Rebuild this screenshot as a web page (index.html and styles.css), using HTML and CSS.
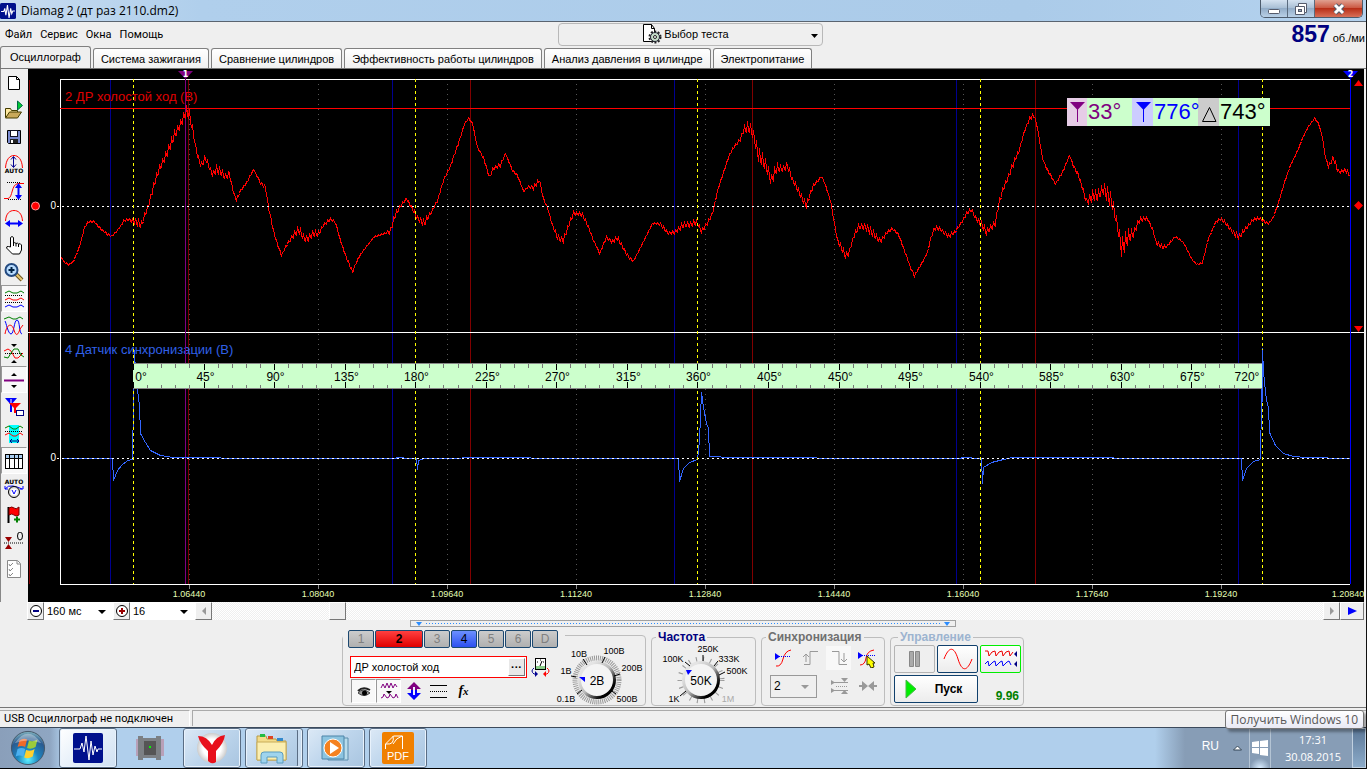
FILE: index.html
```html
<!DOCTYPE html>
<html lang="ru">
<head>
<meta charset="utf-8">
<title>Diamag 2</title>
<link rel="stylesheet" href="styles.css">
</head>
<body>
<div class="window">
<header class="titlebar">
  <svg class="app-icon" width="16" height="16" viewBox="0 0 30 30"><rect width="30" height="30" rx="3" fill="#00108c"/><path d="M2 16h5l2-6 2 13 3-19 3 24 3-18 2 10 2-5h4" fill="none" stroke="#fff" stroke-width="2"/></svg>
  <span class="title">Diamag 2 (дт раз 2110.dm2)</span>
  <div class="winbtns">
    <button class="wb" aria-label="Свернуть"><svg width="14" height="12"><rect x="1.500" y="6.500" width="11" height="4" rx="1" fill="#fff" stroke="#555b6b"/></svg></button>
    <button class="wb" aria-label="Развернуть"><svg width="14" height="14"><path d="M4.500 1.500h8v9h-2v2h-9v-8h3z" fill="#fff" stroke="#555b6b"/><path d="M10.500 10.500v-6h-6" fill="none" stroke="#555b6b"/><rect x="4.500" y="7.500" width="3" height="2" fill="#9ab" stroke="#555b6b"/></svg></button>
    <button class="wb wb-close" aria-label="Закрыть"><svg width="16" height="14"><path d="M4 3l8 8M12 3l-8 8" stroke="#555b6b" stroke-width="5"/><path d="M4 3l8 8M12 3l-8 8" stroke="#fff" stroke-width="3"/></svg></button>
  </div>
</header>

<div class="menubar">
  <nav class="menu"><a href="#">Файл</a><a href="#">Сервис</a><a href="#">Окна</a><a href="#">Помощь</a></nav>
  <button class="test-picker">
    <svg width="22" height="20" viewBox="0 0 22 20"><path d="M2.500 .5h8l3 4v13h-11z" fill="#fff" stroke="#000"/><path d="M10.500 .5v4h3" fill="none" stroke="#000"/><circle cx="14" cy="13" r="5.500" fill="none" stroke="#222" stroke-width="2" stroke-dasharray="2 1.500"/><circle cx="14" cy="13" r="4.500" fill="#c5dcc8" stroke="#223"/><circle cx="14" cy="13" r="1.500" fill="#fff" stroke="#222"/></svg>
    <span>Выбор теста</span>
    <svg class="picker-arrow" width="7" height="4"><path d="M0 0h7l-3.500 4z"/></svg>
  </button>
  <div class="rpm"><b>857</b><span>об./ми</span></div>
</div>

<nav class="tabs">
  <button class="tab active">Осциллограф</button><button class="tab">Система зажигания</button><button class="tab">Сравнение цилиндров</button><button class="tab">Эффективность работы цилиндров</button><button class="tab">Анализ давления в цилиндре</button><button class="tab">Электропитание</button>
</nav>

<main class="workspace">
  <div class="tools">
    <button aria-label="Новый"><svg viewBox="0 0 20 20"><path d="M4.500 3.500h8l3 3v10h-11z" fill="#fff" stroke="#000"/><path d="M12.500 3.500v3h3" fill="none" stroke="#000"/></svg></button>
    <button aria-label="Открыть"><svg viewBox="0 0 20 20"><path d="M1.500 17.500v-9h5l1 2h6v2" fill="#ffe9a0" stroke="#443c00"/><path d="M1.500 18l4-6h12l-4 6z" fill="#c9a95a" stroke="#443c00"/><path d="M13.500 1v9l5-4.500z" fill="#0c3" stroke="#064"/></svg></button>
    <button aria-label="Сохранить"><svg viewBox="0 0 20 20"><path d="M3.500 3.500h13v13h-12l-1-1z" fill="#7b8bd0" stroke="#000"/><rect x="6.500" y="3.500" width="7" height="6" fill="#fff" stroke="#112"/><rect x="6" y="12" width="8" height="4" fill="#222"/><rect x="7" y="13" width="2" height="3" fill="#fff"/></svg></button>
    <button aria-label="Автоамплитуда"><svg viewBox="0 0 20 20"><path d="M1.500 14C2 5 6 1.500 10 1.500S18 5 18.500 14" fill="none" stroke="red"/><path d="M9.500 3v10M7 5.500l2.500-3 2.500 3M7 10.500l2.500 3 2.500-3" fill="none" stroke="#000090"/><text x="10" y="19" class="tiny">AUTO</text></svg></button>
    <button aria-label="Амплитуда"><svg viewBox="0 0 20 20"><path d="M0 17.500h4c5-1 3-14 10-15h6" fill="none" stroke="red"/><path d="M3 1.500h14M4 18.500h14" stroke="#000" stroke-dasharray="1 1"/><path d="M14.500 5v11" stroke="#00f" stroke-width="2"/><path d="M11 7l3.500-5 3.500 5zM11 14l3.500 5 3.500-5z" fill="#00f"/></svg></button>
    <button aria-label="Развёртка"><svg viewBox="0 0 20 20"><path d="M1.500 13C2 5 6 2.500 10 2.500S18 5 18.500 13" fill="none" stroke="red"/><path d="M4 15.500h12" stroke="#00f" stroke-width="2"/><path d="M6 12l-5 3.500 5 3.500zM14 12l5 3.500-5 3.500z" fill="#00f"/></svg></button>
    <button aria-label="Рука"><svg viewBox="0 0 20 20"><path d="M6.500 12V2.500q1.500-2 3 0V8q1.500-1 2.500.5 1.500-1 2.500.5 2-1 3 1v5l-2 4h-7l-6-6q0-2 2-1.500z" fill="#fff" stroke="#000"/><path d="M9.500 8v3M12 8.500v3M14.500 9v3" stroke="#000"/></svg></button>
    <button aria-label="Увеличить"><svg viewBox="0 0 20 20"><path d="M12 12l6 6" stroke="#6b5420" stroke-width="4"/><path d="M12 12l6 6" stroke="#e8c870" stroke-width="2"/><circle cx="7.500" cy="8" r="6" fill="#b8dcff" stroke="#234a80" stroke-width="2"/><path d="M4.500 8h6M7.500 5v6" stroke="#024" stroke-width="2"/></svg></button>
    <button class="on" aria-label="Раздельно"><svg viewBox="0 0 20 20"><path d="M1 4l4-2 4 2 4 0 4-2 3 2" fill="none" stroke="green"/><path d="M1 11l4-2 4 2 4 0 4-2 3 2" fill="none" stroke="red"/><path d="M1 18l4-2 4 2 4 0 4-2 3 2" fill="none" stroke="#00f"/><path d="M1 6.500h18M1 13.500h18" stroke="#000" stroke-dasharray="1 1"/></svg></button>
    <button aria-label="Совместно"><svg viewBox="0 0 20 20"><path d="M0 3l5-2 4 2h3l4-2 3 2" fill="none" stroke="green"/><path d="M1 5c1 1 3 13 6 13s3-14 6-14 2 14 5 14" fill="none" stroke="#00f"/><path d="M1 18c2-11 7-11 9-4s4 5 6-1l3-4" fill="none" stroke="red"/></svg></button>
    <button aria-label="Наложить"><svg viewBox="0 0 20 20"><path d="M1 10.500h18" stroke="#000" stroke-dasharray="1 1"/><path d="M0 8l4-2 3 2 4 7 3 0 5-5" fill="none" stroke="red"/><path d="M0 14l4 1 3-5 3-4 4 0 3 6 3 2" fill="none" stroke="green"/><path d="M7 1h6l-3 3zM7 20h6l-3-3z"/></svg></button>
    <button class="on" aria-label="Разделитель"><svg viewBox="0 0 20 20"><path d="M0 10.500h20" stroke="purple" stroke-width="2"/><path d="M7 6h6l-3-3zM7 15h6l-3 3z"/></svg></button>
    <button aria-label="Маркеры"><svg viewBox="0 0 20 20"><path d="M1 1h12l-6 7z" fill="#00f"/><path d="M7 5v10" stroke="#00f" stroke-width="2"/><path d="M5 6h12l-6 6z" fill="red"/><path d="M11 9v7" stroke="red" stroke-width="2"/><path d="M7 2v4" stroke="#fff"/><rect x="12.500" y="13.500" width="7" height="5" fill="#fff" stroke="#000080"/></svg></button>
    <button aria-label="Окно анализа"><svg viewBox="0 0 20 20"><rect x="5" y="1" width="10" height="18" fill="#0ff"/><path d="M1 4l4-2 4 3 3 0 4-3 3 2" fill="none" stroke="green"/><path d="M1 7.500h18" stroke="#000" stroke-dasharray="1 1"/><path d="M1 11l4-2 4 3 3 0 4-3 3 2" fill="none" stroke="red"/><path d="M6 17h9M8 15l-2 2 2 2M13 15l2 2-2 2" stroke="#000080" fill="none"/></svg></button>
    <button class="on" aria-label="Таблица"><svg viewBox="0 0 20 20"><rect x="1.500" y="3.500" width="17" height="14" fill="#fff" stroke="#000"/><rect x="2" y="4" width="16" height="3" fill="#a8ccf0"/><path d="M1 7.500h18M5.500 4v14M10.500 4v14M14.500 4v14" stroke="#000"/></svg></button>
    <button aria-label="Автовольтметр"><svg viewBox="0 0 20 20"><text x="10" y="6" class="tiny">AUTO</text><path d="M1 11q3-4 8-3t9 3M1 8v3h3M19 8v3h-3" fill="none" stroke="#00f"/><circle cx="10" cy="14" r="5.500" fill="#ddd" stroke="#000"/><circle cx="10" cy="14" r="3.500" fill="#fff"/><path d="M8 12l2 4 2-4" fill="none" stroke="#00f"/></svg></button>
    <button aria-label="Флаг"><svg viewBox="0 0 20 20"><path d="M4.500 2v16" stroke="#000" stroke-width="2"/><path d="M5 3q3-2 5 0t5-1v8q-3 2-5 0t-5 0z" fill="red" stroke="#700"/><path d="M10 14.500h6M13 11.500v6" stroke="green" stroke-width="2"/></svg></button>
    <button aria-label="Ноль"><svg viewBox="0 0 20 20"><path d="M1 5h7l-3.500 5zM1 17h7l-3.500-5z" fill="#900"/><path d="M0 11h20" stroke="#000" stroke-dasharray="1 1"/><ellipse cx="16" cy="4" rx="2.500" ry="4" fill="none" stroke="#000"/></svg></button>
    <button aria-label="Список"><svg viewBox="0 0 20 20"><path d="M3.500 1.500h10l3 3v14h-13z" fill="#fff" stroke="#888"/><path d="M13 2v3h3M5 5l1 2 3-3M5 10l1 2 3-3M5 15l1 2 3-3" fill="none" stroke="#888"/></svg></button>
  </div>

  <svg class="scope" viewBox="28 69 1338 533" role="img" aria-label="Осциллограмма">
    <rect x="28" y="69" width="1336" height="533" fill="#000"/>
    <rect x="1364" y="69" width="2" height="533" fill="#f0f0f0"/>
    <g id="grid" class="crisp"></g>
    <text x="65" y="101" class="ch ch2">2 ДР холостой ход (В)</text>
    <text x="65" y="354" class="ch ch4">4 Датчик синхронизации (В)</text>
    <path class="crisp" d="M60.500 584V79.500H1350M28 332.500H1364M60 584.500H1350" fill="none" stroke="#fff"/>
    <path class="crisp" d="M60 108.500H1350" stroke="red"/>
    <path class="crisp" d="M185.500 79V584" stroke="purple"/>
    <path id="red-wave" class="crisp wave" stroke="red"/>
    <path id="blue-wave" class="crisp wave" stroke="#36f"/>
    <path class="crisp" d="M57 206.500H1350M57 458.500H1350" stroke="#fff" stroke-dasharray="2 3"/>
    <g id="marks" class="crisp"></g>
    <g id="ruler"></g>
    <path class="crisp" d="M1350.500 79V584" stroke="#00f"/>
    <path d="M178 71h15l-7.500 8z" fill="purple"/><path d="M1343 71h15l-7.500 8z" fill="#00f"/>
    <text x="185.500" y="77" class="flag">1</text><text x="1350.500" y="77" class="flag">2</text>
    <circle cx="35.500" cy="206" r="4" fill="red" stroke="#f99"/>
    <text x="56" y="209" class="zero">0</text><text x="56" y="461" class="zero">0</text>
    <path d="M1354 86h9l-4.500-6zM1354 326h9l-4.500 6zM1358.500 201l4.500 4.500-4.500 4.500-4.500-4.500z" fill="red"/>
    <g>
      <rect x="1067" y="98" width="203" height="28" fill="#cfc"/>
      <rect x="1067" y="98" width="20" height="28" fill="#e6cce6"/><rect x="1132" y="98" width="21" height="28" fill="#ccf"/><rect x="1198" y="98" width="21" height="28" fill="#ccc"/>
      <path d="M1070 102h15l-7.500 8z" fill="purple"/><path d="M1077.500 108v14" stroke="purple"/>
      <path d="M1136 102h15l-7.500 8z" fill="#00f"/><path d="M1143.500 108v14" stroke="#00f"/>
      <path d="M1209.500 107.500l6.500 14h-13.500z" fill="none" stroke="#000"/>
      <text x="1088" y="119" class="meas" fill="purple">33°</text><text x="1154" y="119" class="meas" fill="#00f">776°</text><text x="1220" y="119" class="meas" fill="#000">743°</text>
    </g>
  </svg>
</main>

<div class="scrollrow">
  <button class="sq" aria-label="Меньше"><svg width="14" height="14"><circle cx="7" cy="7" r="5.500" fill="#fff" stroke="#000"/><path d="M4 7h6" stroke="#000080" stroke-width="2"/></svg></button>
  <span class="sel w-time"><select aria-label="Длительность"><option>160 мс</option></select><svg width="8" height="4"><path d="M0 0h8l-4 4z"/></svg></span>
  <button class="sq" aria-label="Больше"><svg width="14" height="14"><circle cx="7" cy="7" r="5.500" fill="#fff" stroke="#000"/><path d="M4 7h6M7 4v6" stroke="#900" stroke-width="2"/></svg></button>
  <span class="sel w-zoom"><select aria-label="Масштаб"><option>16</option></select><svg width="8" height="4"><path d="M0 0h8l-4 4z"/></svg></span>
  <button class="sq" aria-label="Назад"><svg width="6" height="8"><path d="M5 0v8l-4-4z" fill="#999"/></svg></button>
  <div class="track"><div class="thumb"></div></div>
  <button class="sq" aria-label="Вперёд"><svg width="6" height="8"><path d="M1 0v8l4-4z" fill="#999"/></svg></button>
  <button class="sq play" aria-label="Воспроизвести"><svg width="9" height="8"><path d="M0 0v8l9-4z" fill="#00f"/></svg></button>
</div>

<div class="split-row"><div class="splitter"><svg width="6" height="4"><path d="M0 0h6l-3 4z" fill="#2a8cff"/></svg><i></i><svg width="6" height="4"><path d="M0 0h6l-3 4z" fill="#2a8cff"/></svg></div></div>

<section class="panel">
  <div class="group channels" role="group" aria-label="Каналы">
    <div class="ch-left">
      <div class="ch-tabs"><button>1</button><button class="c2">2</button><button>3</button><button class="c4">4</button><button>5</button><button>6</button><button>D</button></div>
      <div class="ch-name">
        <div class="name-box"><input type="text" value="ДР холостой ход" aria-label="Название канала"><button class="dots" aria-label="Выбрать">···</button></div>
        <button class="flat" aria-label="Калибровка"><svg width="20" height="20"><rect x="4.500" y="1.500" width="10" height="11" fill="#fff" stroke="#000"/><path d="M5 9h9v3h-9z" fill="#8c8"/><path d="M6 5h1M9 3h1M12 5h1M9 9l2-5" stroke="#000"/><path d="M3 11q-4 3 0 6h3" fill="none" stroke="#000090"/><path d="M4 14v6l3-3z" fill="#000090"/><path d="M16 11q4 3 0 6h-3" fill="none" stroke="red"/><path d="M15 14v6l-3-3z" fill="red"/></svg></button>
      </div>
      <div class="ch-icons">
        <button class="flat on" aria-label="Видимость"><svg width="20" height="20"><path d="M4 12q5-6 12 0-6 5-12 0z" fill="#999" stroke="#444"/><circle cx="10.500" cy="12" r="2.500"/><path d="M4 10q5-5 12-1" fill="none" stroke="#222" stroke-width="2"/></svg></button>
        <button class="flat on" aria-label="Фильтр"><svg width="20" height="20"><path d="M2 7l2-4 2 4 2-5 2 5 2-5 2 5 2-4 2 3M2 17l2-1 1-3 3 4 2-1 1-3 3 4 2-1 1-3 2 4" fill="none" stroke="purple"/><path d="M7 10h6l-3 3z"/></svg></button>
        <button class="flat" aria-label="Инверсия"><svg width="20" height="20"><path d="M3 8l7-7 7 7h-4v3h-6v-3z" fill="purple"/><path d="M3 12l7 7 7-7h-4v-3h-6v3z" fill="#00f"/><path d="M10 6v8" stroke="#eef" stroke-width="2"/></svg></button>
        <button class="flat" aria-label="Уровень"><svg width="20" height="20" class="crisp"><path d="M1 4.500h17M1 16.500h17" stroke="#000"/><path d="M1 10.500h17" stroke="#000" stroke-dasharray="1 1"/></svg></button>
        <button class="flat fx" aria-label="Функция">f<sub>x</sub></button>
      </div>
    </div>
    <svg class="dial" width="92" height="68" viewBox="554 640 92 68">
      <circle cx="597" cy="680" r="22" class="dial-ticks" stroke-dasharray="1 1" stroke-width="5"/>
      <circle cx="597" cy="680" r="17.500" fill="#f4f4f4" stroke="url(#ring)" stroke-width="3"/>
      <path d="M571 676l5 1M583 659l4 6M605 657l-3 6M620 674l-6 2M577 694l5-4M616 694l-4-3" stroke="#000"/>
      <path d="M579 677h6v5z" fill="#00f"/>
      <g class="dl"><text x="579" y="657">10В</text><text x="614" y="654">100В</text><text x="566" y="674">1В</text><text x="632" y="671">200В</text><text x="566" y="702">0.1В</text><text x="627" y="702">500В</text></g>
      <text x="597" y="685" class="dv">2В</text>
    </svg>
  </div>

  <fieldset class="group freq"><legend>Частота</legend>
    <svg class="dial" width="100" height="62" viewBox="652 644 100 62">
      <defs><linearGradient id="ring" x1="0" y1="0" x2="1" y2="1"><stop offset=".2" stop-color="#e4e4e4"/><stop offset=".5" stop-color="#bbb"/><stop offset=".8" stop-color="#000"/></linearGradient></defs>
      <circle cx="701" cy="680" r="20.500" class="dial-ticks" stroke-dasharray="1 6" stroke-width="6"/>
      <circle cx="701" cy="680" r="17.500" fill="#f4f4f4" stroke="url(#ring)" stroke-width="3"/>
      <path d="M685 662l5 4M703 655v6M718 661l-4 5M725 672l-6 3M680 696l6-5" stroke="#000"/>
      <path d="M686 670h6l-4 5z" fill="#00f"/>
      <g class="dl"><text x="708" y="652">250K</text><text x="673" y="662">100K</text><text x="729" y="662">333K</text><text x="737" y="674">500K</text><text x="674" y="702">1K</text><text x="728" y="702" fill="#aaa">1M</text></g>
      <text x="701" y="685" class="dv">50K</text>
    </svg>
  </fieldset>

  <fieldset class="group sync"><legend>Синхронизация</legend>
    <div class="sync-row">
      <button class="flat" aria-label="Уровень синхронизации"><svg width="20" height="20"><path d="M3 18q5 1 7-7t8-9" fill="none" stroke="red"/><path d="M2 8.500h16" stroke="#00f" stroke-dasharray="1 1"/><path d="M2 5v7l5-3.500z" fill="#00f"/></svg></button>
      <button class="flat" aria-label="Фронт"><svg width="20" height="20"><path d="M3 16.500h6v-13h8M2 9l3-3 3 3M5 7v7" fill="none" stroke="#999"/></svg></button>
      <button class="flat hatch" aria-label="Спад"><svg width="20" height="20"><path d="M3 3.500h7v13h8M12 11l3 3 3-3M15 5v8" fill="none" stroke="#999"/></svg></button>
      <button class="flat" aria-label="Выбор точки"><svg width="20" height="20"><path d="M3 17q5 0 6-7t8-8" fill="none" stroke="red"/><path d="M1 7.500h18" stroke="#00f" stroke-dasharray="1 1"/><path d="M1 4v7l5-3.500z" fill="#00f"/><path d="M10 8v9l2-1 2 4 3-1-1-4h2z" fill="#ff0" stroke="#330"/></svg></button>
    </div>
    <div class="sync-row">
      <span class="sel sel-sync"><select aria-label="Канал синхронизации"><option>2</option></select><svg width="8" height="4"><path d="M0 0h8l-4 4z" fill="#999"/></svg></span>
      <button class="flat" aria-label="Смещение"><svg width="20" height="20"><path d="M1 4l4 2.500-4 2.500zM11 2h7l-3.500 4zM11 18h7l-3.500-4zM1 12l4 2.500-4 2.500z" fill="#999"/><path d="M3 6.500h15M3 14.500h15" stroke="#999"/><path d="M6 10.500h12" stroke="#999" stroke-dasharray="1 1"/></svg></button>
      <button class="flat" aria-label="Сжать"><svg width="20" height="20"><path d="M1 10h5M14 10h5" stroke="#999" stroke-width="2"/><path d="M4 5v10l6-5zM16 5v10l-6-5z" fill="#999"/></svg></button>
    </div>
  </fieldset>

  <fieldset class="group ctrl"><legend>Управление</legend>
    <button class="cbtn dis" aria-label="Пауза"><svg width="14" height="18"><path d="M1.500 1.500h4v15h-4zM7.500 1.500h4v15h-4z" fill="#aaa" stroke="#888"/></svg></button>
    <button class="cbtn" aria-label="Однократно"><svg width="32" height="22"><path d="M2 11C7-2 12-2 16 11s9 13 14 0" fill="none" stroke="red"/></svg></button>
    <button class="cbtn green" aria-label="Запись"><svg width="36" height="24"><path d="M2 4h3l1 5 3-4 3-1 1 5 3-4 3-1 1 5 3-4 3-1 1 5 3-4" fill="none" stroke="#e00"/><path d="M2 17l3-3 1 5 4-4 2-1 1 5 4-4 2-1 1 5 4-4 2-1 2 4" fill="none" stroke="#00f"/><path d="M34 4v6l-3-3zM34 14v6l-3-3z" fill="#000080"/></svg></button>
    <button class="cbtn start"><svg width="12" height="20"><path d="M1 1v18l10-9z" fill="#0e0" stroke="#4b4"/></svg><b>Пуск</b></button>
    <output class="load">9.96</output>
  </fieldset>
</section>

<footer class="status"><span class="st-main">USB Осциллограф не подключен</span><span class="st-rest"></span></footer>

<div class="taskbar">
  <button class="orb" aria-label="Пуск Windows"><svg width="36" height="36" viewBox="0 0 38 38"><defs><radialGradient id="orb" cx=".5" cy=".85" r=".9"><stop offset="0" stop-color="#5ff0ff"/><stop offset=".35" stop-color="#1c86c0"/><stop offset=".7" stop-color="#2a5a90"/><stop offset="1" stop-color="#9cc"/></radialGradient></defs><circle cx="19" cy="19" r="17.500" fill="url(#orb)" stroke="#456"/><path d="M10 11q4-3 8-1l-2 8q-4-2-8 0z" fill="#f06a2a"/><path d="M20 11q4 2 9-1l-2 8q-5 3-9 1z" fill="#9ccb3b"/><path d="M8 20q4-2 8 0l-2 8q-4-2-8 0z" fill="#4cb0f0"/><path d="M17 21q5 2 9-1l-2 8q-5 3-9 1z" fill="#ffd02e"/><path d="M5 14Q19-6 33 14 19 8 5 14z" fill="#fff" opacity=".35"/></svg></button>
  <button class="task lit" aria-label="Diamag"><svg width="30" height="30" viewBox="0 0 30 30"><rect width="30" height="30" rx="2" fill="#00108c"/><path d="M1 16h6l2-6 2 9 2-16 3 24 2-19 2 14 2-9 2 6 1-3h4" fill="none" stroke="#fff"/></svg></button>
  <button class="task bare" aria-label="Устройство"><svg width="30" height="26"><rect x="1" y="4" width="28" height="17" fill="#b8a0b8"/><path d="M3 1h5v2h13v-2h5v24h-5v-2h-13v2h-5z" fill="#7c8084"/><rect x="9" y="6" width="12" height="14" fill="#555"/><rect x="14" y="11" width="2" height="2" fill="#0f0"/></svg></button>
  <button class="task" aria-label="Яндекс"><svg width="32" height="32"><defs><radialGradient id="yb"><stop offset=".6" stop-color="#fff"/><stop offset="1" stop-color="#ccc"/></radialGradient></defs><circle cx="16" cy="16" r="15" fill="url(#yb)"/><path d="M2 4q9 0 14 9 4-9 13-10-1 8-9 16v11q-4 3-8-1v-10Q4 12 2 4z" fill="#e8101c"/></svg></button>
  <button class="task stack" aria-label="Проводник"><svg width="34" height="32"><path d="M2 4h9l1 3h9l1 2h9v19h-29z" fill="#f3dc8a" stroke="#b89a44"/><path d="M2 10h29v18h-29z" fill="#fbeeb0" stroke="#c8ac58"/><path d="M5 2h5v3h-5z" fill="#2b4"/><path d="M13 4h5v3h-5z" fill="#d42"/><path d="M22 6h6v3h-6z" fill="#38c"/><path d="M6 31v-8q0-3 3-3h16q3 0 3 3v8h-6v-6h-10v6z" fill="#9fd4ee" stroke="#5a9cc0"/></svg></button>
  <button class="task" aria-label="Медиаплеер"><svg width="32" height="30"><path d="M8 5h20v22h-20z" fill="#b8dcec" stroke="#5a8cac"/><path d="M2 3h22v23h-22z" fill="#8cc4e0" stroke="#4c84a8"/><circle cx="13" cy="15" r="9" fill="#f58220" stroke="#fff"/><path d="M10 9v12l9-6z" fill="#fff"/></svg></button>
  <button class="task" aria-label="PDF"><svg width="32" height="32"><rect width="32" height="32" rx="2" fill="#f08000"/><path d="M3.500 17v-5l8-8h9v13M11 4q2 9-7 8M20 4q-6 2-9 8" fill="none" stroke="#fff" stroke-width="1"/><text x="16" y="28" class="pdf">PDF</text></svg></button>
  <div class="tray">
    <span class="lang">RU</span>
    <svg width="9" height="6"><path d="M.5 5L4.500 1l4 4z" fill="#fff" stroke="#345"/></svg>
    <button class="getwin" aria-label="Получить Windows 10"><svg width="16" height="18"><path d="M0 3l7-1v6h-7zM8 2l8-1v7h-8zM0 9h7v6l-7-1zM8 9h8v8l-8-1z" fill="#fff"/></svg></button>
    <time class="clock">17:31<br>30.08.2015</time>
    <button class="desk" aria-label="Свернуть все окна"></button>
  </div>
  <div class="tooltip" role="tooltip">Получить Windows 10</div>
</div>
</div>
<script src="script.js"></script>
</body>
</html>
```
FILE: styles.css
```css
* { box-sizing: border-box; }
body { margin: 0; background: #efefef; font-family: "Liberation Sans", Arial, sans-serif; font-size: 11px; color: #000; }
button, input, select { font: inherit; color: inherit; margin: 0; padding: 0; }
button { display: inline-flex; align-items: center; justify-content: center; background: none; border: 0; }
svg { display: block; flex: none; }
.crisp { shape-rendering: crispEdges; }
.window { display: flex; flex-direction: column; min-height: 100vh; border-right: 1px solid #111; overflow: hidden; }

.titlebar { display: flex; align-items: center; height: 22px; gap: 5px; background: linear-gradient(90deg, #c8dcf0, #b0cfec 200px, #abcbe9 75%, #b4d2ee); border-bottom: 1px solid #5a6470; }
.title { flex: 1; font-family: "Open Sans", sans-serif; font-size: 12px; }
.winbtns { display: flex; align-self: flex-start; height: 18px; margin-right: 3px; border: 1px solid #4c5b6c; border-top: 0; border-radius: 0 0 5px 5px; overflow: hidden; }
.wb { width: 27px; background: linear-gradient(#d4e2f0, #aac0d6 45%, #93adc8 50%, #b9d0e6); border-right: 1px solid #5a6b7e; }
.wb-close { width: 47px; border: 0; background: linear-gradient(#e0a090, #cc5a44 45%, #b82f18 50%, #d87058); }

.menubar { display: grid; grid-template-columns: 1fr 265px 1fr; height: 24px; align-items: center; }
.menu { display: flex; gap: 8px; padding-left: 5px; font-family: Roboto, sans-serif; }
.menu a { color: #000; text-decoration: none; }
.test-picker { position: relative; height: 23px; gap: 1px; padding-right: 10px; border: 1px solid #b8b8b8; border-radius: 4px; left: 7px; }
.picker-arrow { position: absolute; right: 4px; top: 10px; }
.rpm { display: flex; justify-content: flex-end; align-items: baseline; gap: 3px; padding-right: 1px; }
.rpm b { font-size: 23px; line-height: 24px; color: #000080; }

.tabs { display: flex; align-items: flex-end; height: 23px; gap: 2px; border-bottom: 1px solid #777; }
.tab { height: 20px; padding: 0 7px; background: linear-gradient(#fff, #f0f0f0); border: 1px solid #808080; border-bottom: 0; border-radius: 3px 3px 0 0; white-space: nowrap; }
.tab.active { height: 22px; padding: 0 9px 2px; background: #efefef; }

.workspace { display: flex; border-left: 1px solid #888; }
.tools { display: flex; flex-direction: column; width: 27px; flex: none; background: #efefef; }
.tools button { height: 27px; width: 26px; border: 1px solid transparent; }
.tools svg { width: 20px; height: 20px; }
.tools .on, .flat.on { background: #f8f8f8; border: 1px solid #999; border-right-color: #fff; border-bottom-color: #fff; }
.tiny { font: 700 6px "DejaVu Sans", sans-serif; text-anchor: middle; }
.scope { flex: 1; min-width: 0; height: auto; align-self: flex-start; }
.wave { fill: none; stroke-width: 1; stroke-linejoin: round; }
.ch { font-size: 13px; }
.ch2 { fill: #e00000; }
.ch4 { fill: #3060e8; }
.flag { font: 700 8px "DejaVu Sans", sans-serif; fill: #fff; text-anchor: middle; }
.zero { font-size: 10px; fill: #fff; text-anchor: end; }
.meas { font-size: 22px; }
.deg { font-size: 12px; text-anchor: middle; }
.time { font-size: 9px; fill: #e4ffb4; text-anchor: middle; }

.scrollrow { display: flex; height: 18px; padding-left: 27px; }
.sq { width: 17px; background: #efefef; border: 1px solid #fff; border-right-color: #777; border-bottom-color: #777; }
.play { width: 24px; margin-right: 2px; }
.sel { position: relative; display: block; background: #fff; }
.sel select { appearance: none; width: 100%; height: 100%; border: 0; background: none; padding-left: 3px; }
.sel svg { position: absolute; right: 7px; top: 8px; }
.w-time { width: 69px; }
.w-zoom { width: 65px; }
.track { flex: 1; padding-left: 117px; background: repeating-conic-gradient(#efefef 0 25%, #fff 0 50%) 0 0 / 2px 2px; }
.thumb { width: 17px; height: 100%; background: #efefef; border: 1px solid #fff; border-right-color: #777; border-bottom-color: #777; }

.split-row { display: flex; justify-content: center; height: 8px; }
.splitter { display: flex; align-items: center; gap: 4px; width: 40%; height: 7px; padding: 0 5px; border: 1px solid #a0a0a0; }
.splitter i { flex: 1; height: 1px; background: repeating-linear-gradient(90deg, #2a8cff 0 1px, transparent 1px 3px); }

.panel { display: flex; justify-content: center; gap: 5px; height: 80px; padding-bottom: 1px; border-bottom: 1px solid #777; }
.group { margin: 2px 0 0; padding: 0; border: 1px solid #bdbdbd; border-radius: 4px; min-width: 0; }
.group legend { margin-left: 4px; padding: 0 2px; font-size: 12px; font-weight: 700; line-height: 14px; }
.channels { display: flex; width: 304px; margin-top: 7px; }
.ch-left { width: 211px; }
.ch-tabs { display: flex; gap: 1px; width: 222px; margin-top: -6px; padding-left: 5px; background: #efefef; position: relative; font-size: 12px; }
.ch-tabs button { width: 26px; height: 18px; border: 1px solid #1c4870; border-radius: 2px; background: linear-gradient(#ccc, #b0b0b0); color: #808080; }
.ch-tabs .c2 { width: 48px; background: linear-gradient(#ff4040, #e00000); color: #000; font-weight: 700; }
.ch-tabs .c4 { background: linear-gradient(#6c90ff, #2c50f0); color: #000; }
.ch-name { display: flex; align-items: center; gap: 1px; margin: 7px 0 0 7px; }
.name-box { display: flex; width: 177px; height: 22px; padding: 1px; border: 1px solid red; background: #fff; }
.name-box input { flex: 1; min-width: 0; border: 0; padding-left: 2px; outline: 0; background: none; }
.dots { width: 17px; height: 18px; background: #e8e8e8; border: 1px solid #fff; border-right-color: #777; border-bottom-color: #777; font-weight: 700; }
.ch-icons { display: flex; padding-left: 8px; }
.flat { width: 25px; height: 24px; }
.hatch { background: #f8f8f8; }
.fx { font: italic 700 14px "Liberation Serif", serif; }
.fx sub { font-size: 11px; }
.dial { margin-top: 4px; }
.dial-ticks { fill: none; stroke: #999; }
.dl { font-size: 9px; text-anchor: middle; }
.dv { font-size: 12px; text-anchor: middle; }
.freq { width: 105px; }
.freq legend { color: #000080; }
.freq .dial { margin-top: 0; }
.sync { width: 124px; }
.sync legend { color: #707070; }
.sync-row { display: flex; height: 28px; align-items: center; padding-left: 8px; gap: 3px; }
.sync-row .sel { width: 47px; height: 23px; margin-right: 7px; background: #efefef; border: 1px solid #999; font-size: 12px; }
.sync-row .sel svg { top: 9px; }
.ctrl { display: grid; grid-template-columns: 41px 41px 41px; gap: 2px; width: 134px; padding: 1px 3px; align-content: start; }
.ctrl legend { color: #9db4d0; }
.cbtn { height: 28px; border: 1px solid #10406c; border-radius: 2px; background: linear-gradient(#fff, #ececec); font-size: 12px; }
.cbtn.dis { border-color: #b4b4b4; background: #efefef; }
.cbtn.green { border-color: #0e0; }
.start { grid-column: 1 / 3; gap: 18px; padding-right: 5px; }
.load { align-self: end; justify-self: end; font-size: 12px; font-weight: 700; color: #008000; padding-right: 2px; }

.status { display: flex; gap: 2px; height: 20px; padding: 2px 0 1px; font-family: Roboto, sans-serif; border-bottom: 1px solid #3c4a5c; }
.st-main { width: 190px; padding-left: 4px; line-height: 15px; border-top: 1px solid #aaa; border-right: 1px solid #fff; white-space: nowrap; }
.st-rest { flex: 1; border-top: 1px solid #aaa; border-left: 1px solid #aaa; }

.taskbar { position: relative; display: flex; gap: 4px; height: 41px; background: linear-gradient(90deg, #8a9fba, #8fa6c2 50px, #b0cfec 64px, #b0cfec 1155px, #879db6 1185px); border-bottom: 1px solid #000; }
.orb { width: 55px; }
.task { width: 58px; height: 40px; background: linear-gradient(135deg, #dce9f6, #bdd5ec 50%, #a9c5e0); border: 1px solid #5a6d84; border-radius: 3px; box-shadow: inset 0 0 0 1px #e8f2fc; }
.task.lit { background: linear-gradient(135deg, #fff, #eaf2fa 40%, #d0e1f2); }
.task.bare { background: none; border: 0; box-shadow: none; }
.task.stack { padding-right: 4px; box-shadow: inset 0 0 0 1px #e8f2fc, inset -4px 0 0 #c8dcf0, inset -5px 0 0 #5a6d84; }
.pdf { font-size: 11px; fill: #fff; text-anchor: middle; }
.tray { display: flex; align-items: center; margin-left: auto; color: #fff; font-family: "Open Sans", sans-serif; }
.lang { margin: 0 14px 4px 0; font-family: "Liberation Sans", sans-serif; font-size: 12px; }
.getwin { width: 22px; height: 40px; margin: 0 7px; border: solid #b4c4d4; border-width: 0 1px; background: radial-gradient(circle at bottom, #d8ecff, transparent 10px); }
.clock { text-align: center; line-height: 17px; width: 70px; }
.desk { width: 14px; height: 40px; margin-left: 4px; background: linear-gradient(#5c7898, #8cabc9); border: 1px solid #c0d0e0; }
.tooltip { position: absolute; right: 2px; top: -18px; padding: 0 5px; border: 1px solid #767676; border-radius: 3px; background: linear-gradient(#fff, #e8e9f4); font: 12px/17px "Open Sans", sans-serif; color: #575757; box-shadow: 3px 3px 3px #0005; }
```
FILE: script.js
```js
const NS = 'http://www.w3.org/2000/svg';
function add(parent, name, attrs, text) {
  const el = document.createElementNS(NS, name);
  for (const key in attrs) el.setAttribute(key, attrs[key]);
  if (text) el.textContent = text;
  parent.append(el);
}
const grid = document.getElementById('grid');
const marks = document.getElementById('marks');
const ruler = document.getElementById('ruler');
const scope = document.querySelector('.scope');

// Time grid, one division every 129 px
for (let i = 0; i < 10; i++) {
  const x = 189 + i * 129;
  if (i < 9) {
    add(grid, 'path', { d: `M${x}.5 79V584`, stroke: '#555', 'stroke-dasharray': '1 4' });
    add(grid, 'path', { d: `M${x}.5 585v4`, stroke: '#888' });
  }
  add(scope, 'text', { x: Math.min(x, 1348), y: 597, class: 'time' }, (1.0644 + i * 0.016).toFixed(5));
}
for (const x of [110, 392, 674, 956, 1238]) add(grid, 'path', { d: `M${x}.5 80V584`, stroke: '#000090' });
for (const x of [29, 188, 470, 752, 1035]) add(grid, 'path', { d: `M${x}.5 80V584`, stroke: '#800000' });
for (const x of [133, 415, 697, 980, 1262]) add(marks, 'path', { d: `M${x}.5 79V584`, stroke: '#ff0', 'stroke-dasharray': '3 3' });

// Angle ruler, 0..720 degrees
add(ruler, 'rect', { x: 133, y: 364, width: 1129, height: 24, fill: '#cfc' });
add(ruler, 'path', { d: 'M133 363.5H1262M133 388.5H1262', stroke: '#888', class: 'crisp' });
for (let i = 0; i <= 80; i++) {
  const x = Math.round(133 + i * 14.11) + 0.5;
  const major = i % 5 === 0;
  add(ruler, 'path', { d: `M${x} 364v${major ? 6 : 4}M${x} 388v${major ? -6 : -3}`, stroke: major ? '#000' : '#777', class: 'crisp' });
  if (major) add(ruler, 'text', { x: i === 0 ? 141 : i === 80 ? 1247 : x + 1, y: 381, class: 'deg' }, `${i * 9}°`);
}

// Samples: x, level, ripple amplitude
const red = [[61,257,1],[63,261,1],[68,264,1],[73,261,1],[77,252,1],[81,239,1],[84,227,1],[87,222,1],[93,221,1],[97,225,1],[102,230,1],[107,234,1],[111,236,1],[115,232,1],[119,227,1],[124,220,2],[128,219,2],[133,220,3],[138,223,5],[141,225,5],[144,216,5],[147,207,4],[152,190,5],[157,174,5],[163,159,6],[170,145,6],[176,131,7],[182,119,6],[186,111,6],[189,116,8],[192,128,5],[195,145,4],[198,158,4],[201,165,4],[205,158,5],[208,165,4],[212,173,3],[216,169,5],[220,172,5],[225,176,5],[229,172,4],[231,183,3],[234,195,2],[236,200,2],[240,190,2],[247,181,2],[253,169,1],[260,182,2],[265,187,2],[268,207,2],[273,230,2],[277,244,2],[281,255,1],[287,243,2],[292,235,4],[298,230,5],[303,237,5],[307,238,5],[313,233,4],[318,234,4],[323,224,2],[330,219,2],[335,222,1],[340,240,1],[346,258,2],[352,271,2],[358,257,1],[367,245,1],[373,237,1],[383,233,1],[390,230,4],[394,217,4],[400,205,3],[406,198,2],[411,207,2],[417,217,4],[424,223,5],[430,213,3],[437,200,2],[443,180,2],[450,165,2],[458,143,2],[464,123,1],[468,118,1],[472,123,1],[477,147,1],[483,157,2],[489,177,2],[493,168,3],[500,164,3],[505,153,1],[512,170,1],[517,175,1],[523,191,1],[528,186,2],[533,187,3],[539,180,3],[543,198,2],[547,207,2],[552,225,2],[557,237,4],[563,239,5],[567,228,3],[573,213,3],[581,213,3],[585,220,2],[592,237,2],[599,253,1],[606,237,2],[612,241,3],[617,238,3],[622,246,3],[628,256,2],[633,261,1],[640,247,1],[646,235,1],[652,223,1],[660,223,2],[667,233,2],[675,231,3],[683,225,4],[695,222,4],[698,225,3],[701,231,4],[707,222,3],[712,213,2],[718,187,1],[728,157,1],[733,147,3],[740,138,3],[743,130,4],[747,128,7],[751,129,8],[754,137,7],[758,155,8],[763,163,9],[767,168,9],[771,179,8],[776,169,6],[783,168,5],[787,164,4],[792,180,3],[799,192,5],[806,205,4],[810,193,3],[813,185,3],[821,176,1],[824,182,1],[830,200,2],[833,217,2],[837,240,2],[842,250,4],[845,255,5],[848,253,4],[853,237,3],[858,227,4],[865,225,5],[872,233,5],[880,240,4],[887,232,2],[892,228,2],[898,234,1],[905,253,2],[910,267,2],[914,275,2],[920,265,1],[927,252,1],[930,238,2],[934,228,3],[940,229,3],[949,236,3],[955,231,2],[962,220,2],[967,212,3],[971,210,3],[975,217,3],[982,225,4],[986,233,5],[990,227,5],[995,222,5],[998,205,4],[1003,188,4],[1010,170,5],[1018,152,3],[1025,127,2],[1030,117,3],[1034,116,3],[1037,127,1],[1042,158,1],[1047,170,2],[1055,183,1],[1062,172,2],[1069,155,1],[1073,165,2],[1078,175,2],[1082,188,3],[1086,201,5],[1092,195,7],[1097,197,7],[1103,187,9],[1108,195,10],[1113,208,7],[1117,225,8],[1121,245,12],[1124,243,11],[1128,238,9],[1133,233,7],[1138,220,4],[1147,218,2],[1152,228,2],[1156,243,2],[1162,247,4],[1167,245,2],[1175,236,1],[1183,242,1],[1192,260,1],[1197,264,1],[1202,262,1],[1208,238,1],[1215,222,1],[1220,218,2],[1227,225,3],[1233,232,3],[1239,237,4],[1245,228,3],[1252,220,2],[1258,218,2],[1263,220,2],[1268,223,1],[1273,217,1],[1278,202,1],[1283,185,1],[1290,165,1],[1297,150,1],[1307,127,1],[1314,118,1],[1318,123,1],[1322,137,1],[1325,157,1],[1328,165,3],[1333,158,3],[1338,172,3],[1345,169,3],[1350,176,2]];
let d = '';
let seg = 0;
for (let x = 61; x <= 1349; x++) {
  while (red[seg + 1][0] < x) seg++;
  const [x0, y0, n0] = red[seg];
  const [x1, y1, n1] = red[seg + 1];
  const t = (x - x0) / (x1 - x0);
  const wave = [-1.1, 0.3, 0.9][x % 3] * (0.75 + 0.25 * Math.sin(x * 1.7));
  const y = y0 + (y1 - y0) * t + (n0 + (n1 - n0) * t) * wave;
  d += (d ? 'L' : 'M') + x + '.5 ' + (Math.round(y) + 0.5);
}
document.getElementById('red-wave').setAttribute('d', d);

const blue = [[61,458],[112,458],[113,480],[115,475],[117,470],[121,465],[127,460],[132,459],[133,402],[134,350],[135,372],[137,390],[139,405],[140,433],[145,442],[150,450],[160,455],[173,457],[200,457],[240,458],[395,458],[397,457],[403,457],[404,458],[416,458],[417,469],[418,460],[424,458],[500,457],[560,458],[678,458],[679,481],[683,468],[689,462],[697,459],[699,440],[701,392],[703,407],[706,423],[708,428],[709,456],[719,456],[722,457],[800,457],[832,458],[960,458],[962,457],[970,457],[972,458],[981,458],[982,483],[983,467],[991,462],[1003,459],[1012,457],[1110,457],[1116,458],[1241,458],[1242,480],[1246,468],[1253,461],[1260,459],[1261,402],[1262,348],[1263,372],[1266,400],[1268,407],[1269,432],[1275,445],[1283,453],[1293,456],[1305,457],[1350,458]];
document.getElementById('blue-wave').setAttribute('d', 'M' + blue.map(p => `${p[0]}.5 ${p[1]}.5`).join('L'));
// The sync spike runs over the dashed marks outside the ruler
add(scope, 'path', { d: 'M134.5 350V363M1262.5 350V402', class: 'crisp wave', stroke: '#36f' });
```
